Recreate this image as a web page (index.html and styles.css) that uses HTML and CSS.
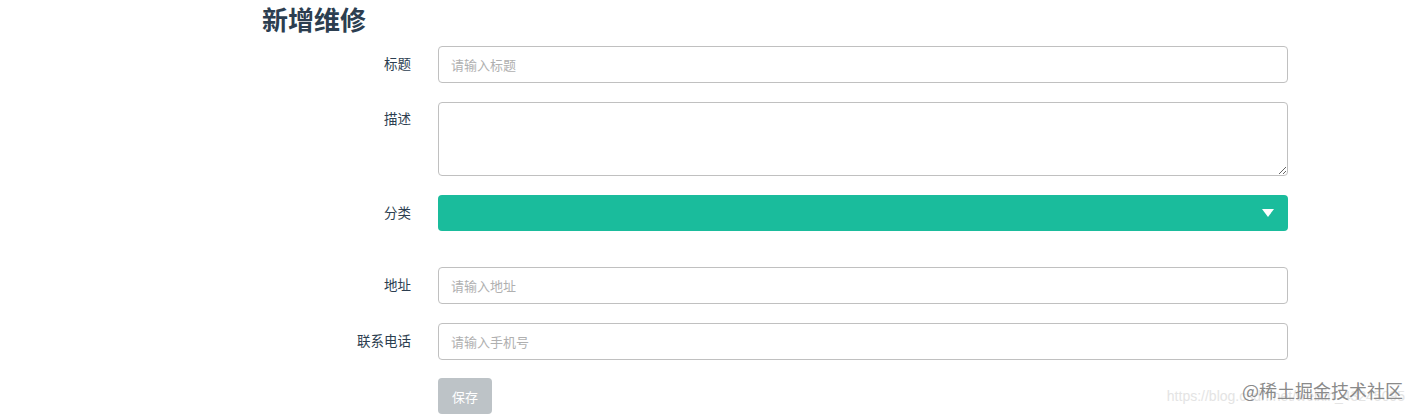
FILE: index.html
```html
<!DOCTYPE html>
<html lang="zh-CN">
<head>
    <meta charset="UTF-8">
    <title>新增维修</title>
    <link rel="stylesheet" href="styles.css">
</head>
<body>
    <div class="page">
        <h2 class="title">新增维修</h2>
        <form class="form">
            <label class="label" for="title">标题</label>
            <input class="field" type="text" id="title" placeholder="请输入标题">

            <label class="label label-top" for="desc">描述</label>
            <textarea class="field area" id="desc"></textarea>

            <label class="label spaced" for="type">分类</label>
            <div class="select spaced" id="type">
                <span class="caret"></span>
            </div>

            <label class="label" for="addr">地址</label>
            <input class="field" type="text" id="addr" placeholder="请输入地址">

            <label class="label" for="phone">联系电话</label>
            <input class="field" type="tel" id="phone" placeholder="请输入手机号">

            <span></span>
            <div><button class="btn" type="button">保存</button></div>
        </form>
    </div>

    <div class="watermark">
        <span class="url">https://blog.csdn.net/weixin_43245095</span>
        <span class="brand">@稀土掘金技术社区</span>
    </div>
</body>
</html>
```

FILE: styles.css
```css
body {
    margin: 0;
    background: #fff;
    font-family: "Noto Sans CJK SC", "Noto Sans", sans-serif;
    color: #333;
    overflow: hidden;
}

.page {
    padding: 0 129px 0 262px;
}

.title {
    margin: 0;
    font-size: 26px;
    line-height: 38px;
    font-weight: 700;
    color: #2c3e50;
}

.form {
    display: grid;
    grid-template-columns: 149px 1fr;
    column-gap: 27px;
    row-gap: 19px;
    margin-top: 8px;
}

.label {
    text-align: right;
    font-size: 13.5px;
    color: #2c3e50;
    align-self: center;
    padding-bottom: 3px;
}

.label-top {
    align-self: start;
    padding-top: 6px;
    padding-bottom: 0;
}

.spaced {
    margin-bottom: 17px;
}

.field {
    box-sizing: border-box;
    width: 100%;
    height: 37px;
    padding: 0 12px;
    border: 1px solid #c0c0c0;
    border-radius: 4px;
    font-family: inherit;
    font-size: 13px;
    color: #333;
    outline: none;
}

.field::placeholder {
    color: #b0b0b0;
}

.area {
    height: 74px;
    padding-top: 8px;
    resize: vertical;
}

.select {
    height: 36px;
    background: #1abc9c;
    border-radius: 4px;
    display: flex;
    align-items: center;
    justify-content: flex-end;
    padding-right: 14px;
}

.caret {
    width: 0;
    height: 0;
    border-left: 6px solid transparent;
    border-right: 6px solid transparent;
    border-top: 8px solid #fff;
}

.btn {
    height: 36px;
    margin-top: -1px;
    padding: 0 14px;
    border: none;
    border-radius: 4px;
    background: #bdc3c7;
    color: #fff;
    font-family: inherit;
    font-size: 13px;
}

.watermark {
    position: absolute;
    right: 12px;
    top: 378px;
    height: 36px;
    width: 240px;
}

.watermark .url {
    position: absolute;
    right: 0;
    top: 10px;
    color: #e4e4e4;
    font-family: "Liberation Sans", sans-serif;
    font-size: 14px;
    white-space: nowrap;
}

.watermark .brand {
    position: absolute;
    right: 2px;
    top: -1px;
    color: #8a8a8a;
    font-size: 18px;
    white-space: nowrap;
}
```
